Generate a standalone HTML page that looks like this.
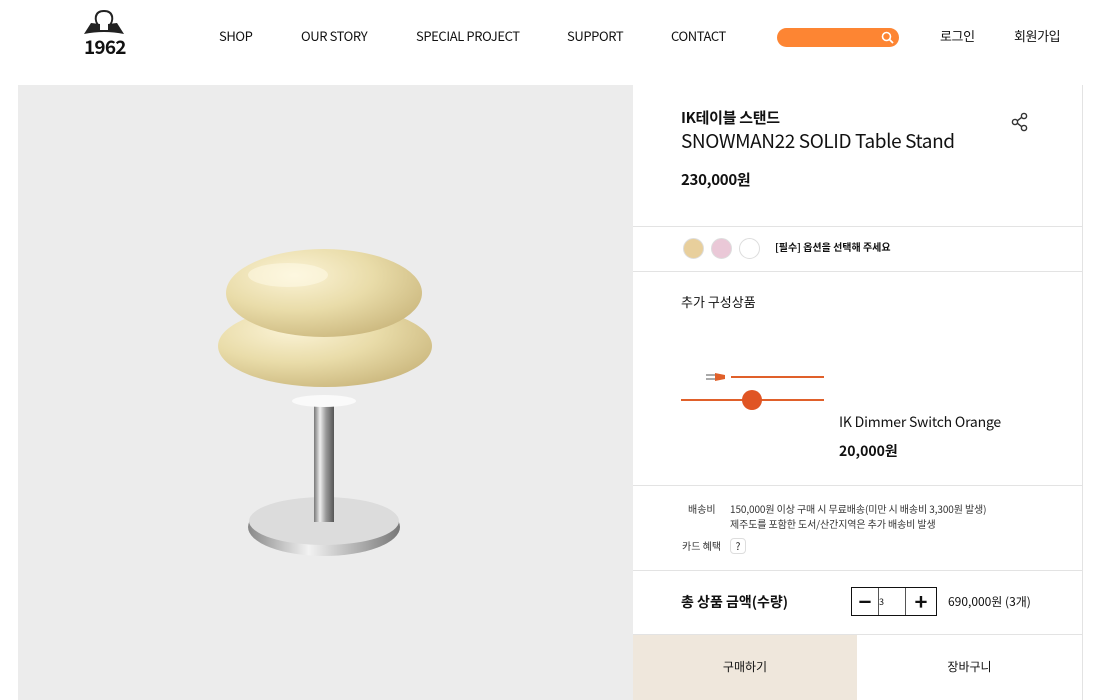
<!DOCTYPE html>
<html><head><meta charset="utf-8"><style>
*{margin:0;padding:0;box-sizing:border-box}
body{width:1100px;height:700px;overflow:hidden;background:#fff;font-family:"Noto Sans CJK KR","Liberation Sans",sans-serif;color:#111;position:relative}
.a{position:absolute;white-space:nowrap}
.nav{font-size:13px;top:26px;letter-spacing:-0.4px}
.line{position:absolute;left:633px;width:449px;height:1px;background:#e3e3e3}
</style></head><body>
<svg class="a" style="left:83px;top:6px" width="42" height="30" viewBox="0 0 42 30">
<path d="M16 20 C11 15 11 5 21 5 C31 5 31 15 26 20" fill="none" stroke="#222" stroke-width="2"/>
<path d="M1 28 L8 17 L17 18 L17 24 L25 24 L25 18 L34 17 L41 28 Q21 24 1 28Z" fill="#222"/>
</svg>
<div class="a" style="left:84px;top:33px;font-size:19px;font-weight:bold;letter-spacing:-0.8px">1962</div>
<div class="a nav" style="left:219px">SHOP</div>
<div class="a nav" style="left:301px">OUR STORY</div>
<div class="a nav" style="left:416px">SPECIAL PROJECT</div>
<div class="a nav" style="left:567px">SUPPORT</div>
<div class="a nav" style="left:671px">CONTACT</div>
<div class="a" style="left:777px;top:28px;width:122px;height:19px;border-radius:10px;background:#fd8533"></div>
<svg class="a" style="left:881px;top:31px" width="13" height="13" viewBox="0 0 13 13"><circle cx="5.5" cy="5.5" r="4" fill="none" stroke="#fff" stroke-width="1.6"/><path d="M8.5 8.5L12 12" stroke="#fff" stroke-width="1.8"/></svg>
<div class="a nav" style="left:940px">로그인</div>
<div class="a nav" style="left:1014px">회원가입</div>
<div class="a" style="left:18px;top:85px;width:615px;height:615px;background:#ececec"></div>
<svg class="a" style="left:18px;top:85px" width="615" height="615" viewBox="0 0 615 615">
<defs>
<radialGradient id="g" cx="0.35" cy="0.3" r="0.8"><stop offset="0" stop-color="#fbf3d6"/><stop offset="0.5" stop-color="#e9dca9"/><stop offset="1" stop-color="#c9b57b"/></radialGradient>
<linearGradient id="p" x1="0" x2="1"><stop offset="0" stop-color="#777"/><stop offset="0.3" stop-color="#eee"/><stop offset="0.6" stop-color="#999"/><stop offset="1" stop-color="#555"/></linearGradient>
<linearGradient id="b" x1="0" x2="1"><stop offset="0" stop-color="#888"/><stop offset="0.4" stop-color="#f2f2f2"/><stop offset="1" stop-color="#777"/></linearGradient>
</defs>
<ellipse cx="306" cy="442" rx="76" ry="29" fill="url(#b)"/>
<ellipse cx="306" cy="436" rx="75" ry="24" fill="#dcdcdc"/>
<rect x="296" y="312" width="20" height="125" fill="url(#p)"/>
<ellipse cx="306" cy="316" rx="32" ry="6" fill="#fafafa"/>
<ellipse cx="307" cy="261" rx="107" ry="41" fill="url(#g)"/>
<ellipse cx="306" cy="208" rx="98" ry="44" fill="url(#g)"/>
<ellipse cx="270" cy="190" rx="40" ry="12" fill="#fffbea" opacity="0.5"/>
</svg>
<div class="a" style="left:1082px;top:85px;width:1px;height:615px;background:#e3e3e3"></div>
<div class="a" style="left:681px;top:107px;font-size:15px;font-weight:bold;letter-spacing:-0.3px">IK테이블 스탠드</div>
<div class="a" style="left:681px;top:127px;font-size:19px;letter-spacing:-0.4px">SNOWMAN22 SOLID Table Stand</div>
<svg class="a" style="left:1011px;top:112px" width="18" height="20" viewBox="0 0 18 20"><circle cx="13" cy="4" r="2.6" fill="none" stroke="#333" stroke-width="1.4"/><circle cx="4" cy="10" r="2.6" fill="none" stroke="#333" stroke-width="1.4"/><circle cx="13" cy="16" r="2.6" fill="none" stroke="#333" stroke-width="1.4"/><path d="M6.3 8.8L10.7 5.3M6.3 11.2L10.7 14.7" stroke="#333" stroke-width="1.4"/></svg>
<div class="a" style="left:681px;top:169px;font-size:15px;font-weight:bold;letter-spacing:-0.3px">230,000원</div>
<div class="line" style="top:226px"></div>
<div class="a" style="left:683px;top:238px;width:21px;height:21px;border-radius:50%;background:#e8cf9c;border:1px solid #ddd"></div>
<div class="a" style="left:711px;top:238px;width:21px;height:21px;border-radius:50%;background:#eac8d7;border:1px solid #ddd"></div>
<div class="a" style="left:739px;top:238px;width:21px;height:21px;border-radius:50%;background:#fff;border:1px solid #ddd"></div>
<div class="a" style="left:775px;top:239px;font-size:10px;font-weight:bold">[필수] 옵션을 선택해 주세요</div>
<div class="line" style="top:271px"></div>
<div class="a" style="left:681px;top:292px;font-size:13px">추가 구성상품</div>
<svg class="a" style="left:681px;top:365px" width="145" height="50" viewBox="0 0 145 50">
<path d="M50 12H143" stroke="#e0602a" stroke-width="2"/>
<path d="M34 8L44 10V14L34 16Z" fill="#e0602a"/><path d="M25 10H34M25 14H34" stroke="#777" stroke-width="1.2"/>
<path d="M0 35H143" stroke="#e0602a" stroke-width="2"/>
<circle cx="71" cy="35" r="10" fill="#e05524"/>
</svg>
<div class="a" style="left:839px;top:412px;font-size:14px;letter-spacing:-0.2px">IK Dimmer Switch Orange</div>
<div class="a" style="left:839px;top:441px;font-size:14px;font-weight:bold">20,000원</div>
<div class="line" style="top:485px"></div>
<div class="a" style="left:688px;top:501px;font-size:10px;color:#333">배송비</div>
<div class="a" style="left:730px;top:501px;font-size:10px;color:#333;line-height:15px;letter-spacing:-0.1px">150,000원 이상 구매 시 무료배송(미만 시 배송비 3,300원 발생)<br>제주도를 포함한 도서/산간지역은 추가 배송비 발생</div>
<div class="a" style="left:682px;top:538px;font-size:10px;color:#333">카드 혜택</div>
<div class="a" style="left:730px;top:538px;width:16px;height:16px;border:1px solid #ddd;border-radius:4px;font-size:10px;text-align:center;line-height:14px">?</div>
<div class="line" style="top:570px"></div>
<div class="a" style="left:681px;top:592px;font-size:14px;font-weight:bold">총 상품 금액(수량)</div>
<div class="a" style="left:851px;top:587px;width:86px;height:29px;border:1px solid #111;display:flex">
<div style="width:27px;border-right:1px solid #555;font-size:22px;font-weight:bold;text-align:center;line-height:26px">−</div>
<div style="width:27px;border-right:1px solid #555;font-size:9px;line-height:27px">3</div>
<div style="flex:1;font-size:22px;font-weight:bold;text-align:center;line-height:26px">+</div>
</div>
<div class="a" style="left:948px;top:593px;font-size:12px">690,000원 (3개)</div>
<div class="line" style="top:634px"></div>
<div class="a" style="left:633px;top:635px;width:224px;height:65px;background:#efe7dc;font-size:12px;text-align:center;line-height:64px">구매하기</div>
<div class="a" style="left:857px;top:635px;width:225px;height:65px;font-size:12px;text-align:center;line-height:64px">장바구니</div>
</body></html>
